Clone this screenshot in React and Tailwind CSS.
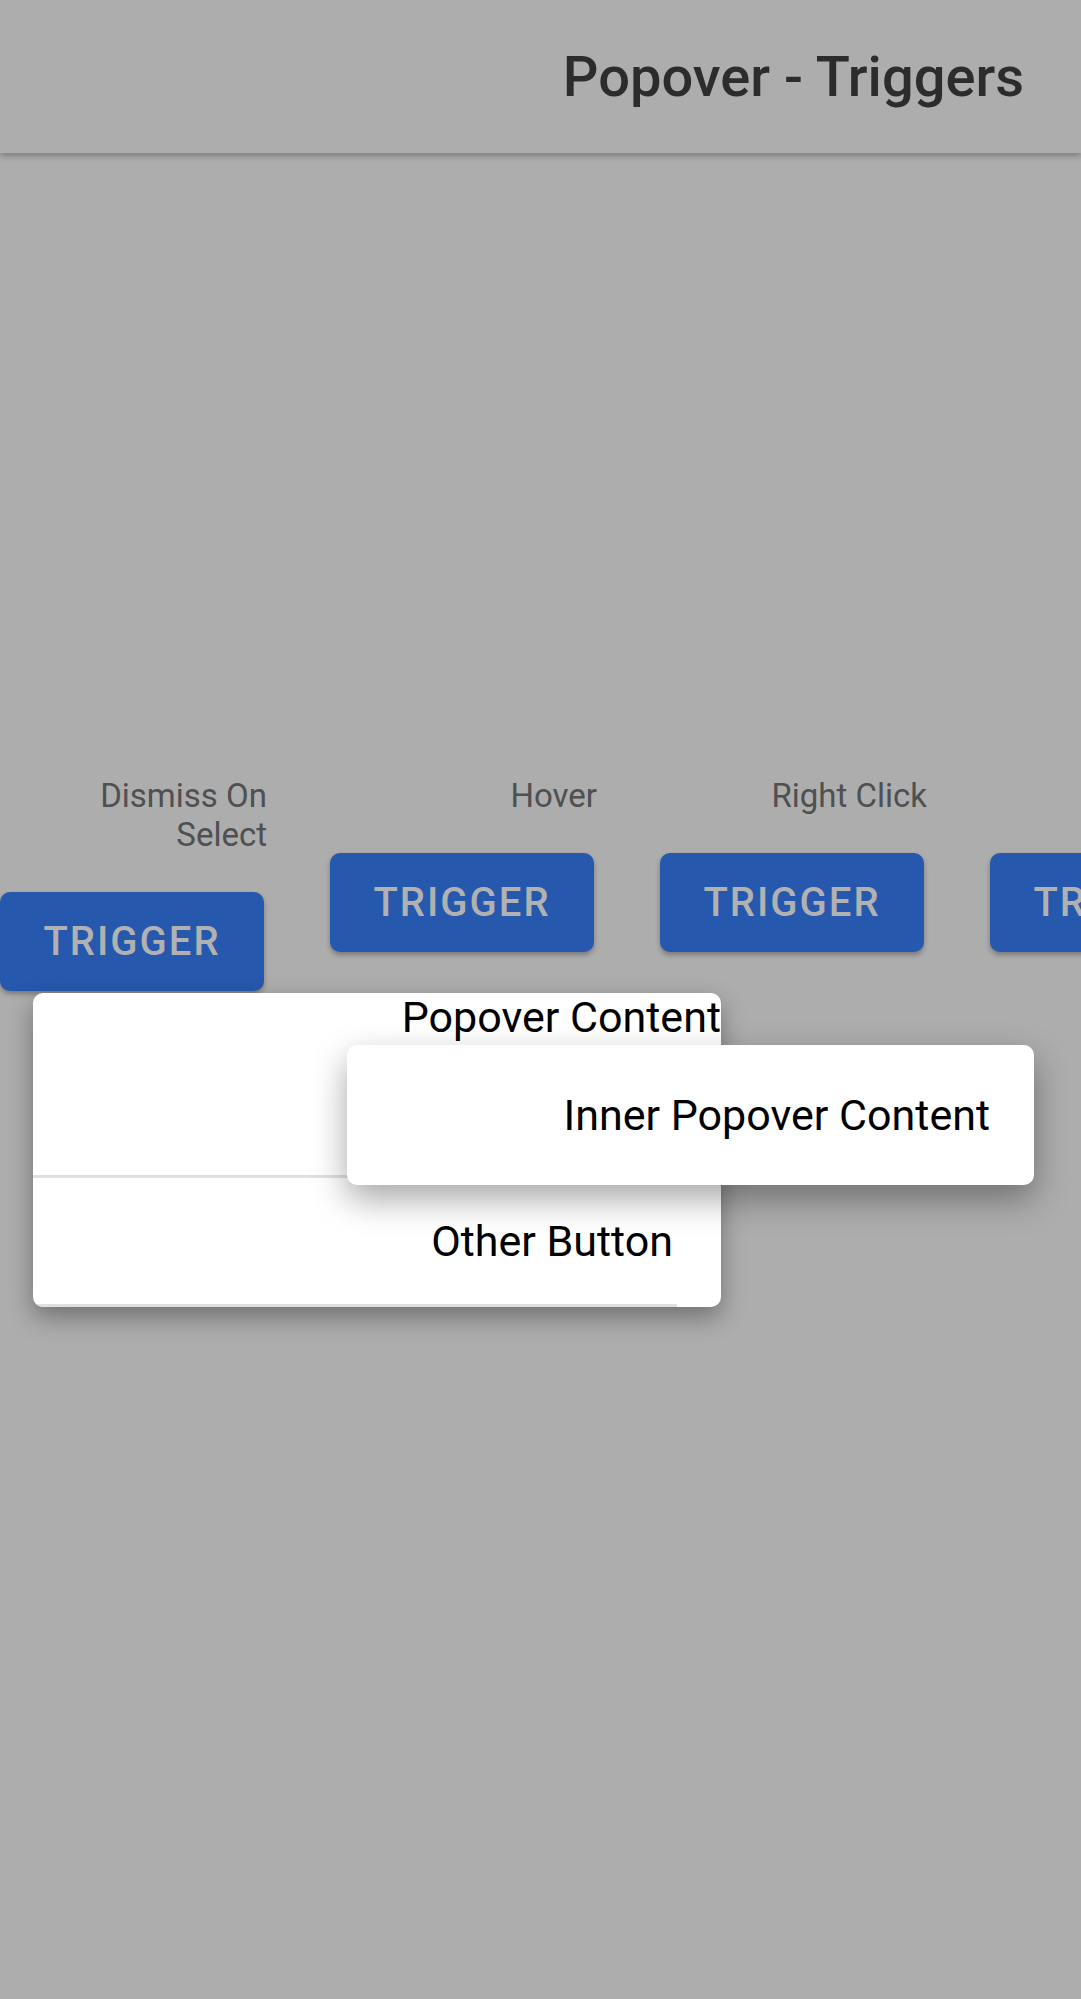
import React from 'react';

const triggers = [
  { label: 'Dismiss On Select', labelClass: 'w-[200px]' },
  { label: 'Hover', labelClass: '' },
  { label: 'Right Click', labelClass: '' },
  { label: '\u00a0', labelClass: '' },
];

function TriggerColumn({ label, labelClass }) {
  return (
    <div className="flex w-[264px] shrink-0 flex-col items-end">
      <div className={`text-right text-[33px] leading-[39px] text-[#4e5052] -mr-[3px] ${labelClass}`}>{label}</div>
      <button className="mt-[38px] h-[99px] w-[264px] rounded-[10px] bg-[#2658ad] text-[40px] font-medium tracking-[2px] text-[#b1b1b1] shadow-[0_3px_5px_rgba(0,0,0,0.3)]">
        TRIGGER
      </button>
    </div>
  );
}

export default function App() {
  return (
    <div className="relative h-[1999px] w-[1081px] overflow-hidden bg-[#adadad] font-['Roboto',sans-serif]">
      {/* barra superior */}
      <header className="relative z-10 flex h-[153px] items-center justify-end bg-[#adadad] pr-[57px] shadow-[0_3px_6px_rgba(0,0,0,0.28)]">
        <h1 className="text-[56px] font-medium text-[#2c2c2c]">Popover - Triggers</h1>
      </header>

      <main className="flex gap-[66px] pt-[623px]">
        {triggers.map((t, i) => (
          <TriggerColumn key={i} label={t.label} labelClass={t.labelClass} />
        ))}
      </main>

      {/* popover abierto */}
      <div className="absolute left-[33px] top-[993px] z-20 flex h-[314px] w-[688px] flex-col overflow-hidden rounded-[10px] bg-white shadow-[0_10px_24px_rgba(0,0,0,0.35)]">
        <div className="text-right text-[43px] leading-[49px] text-black">Popover Content</div>
        <div className="h-[136px] shrink-0 border-b-[3px] border-[#e0e0e0]" />
        <div className="mr-[44px] flex flex-1 items-center justify-end border-b-[3px] border-[#e0e0e0] pr-[4px] text-[43px] text-black">
          Other Button
        </div>
      </div>

      <div className="absolute left-[347px] top-[1045px] z-30 flex h-[140px] w-[687px] items-center justify-end rounded-[10px] bg-white pr-[44px] text-[43px] text-black shadow-[0_14px_34px_rgba(0,0,0,0.35)]">
        Inner Popover Content
      </div>
    </div>
  );
}
